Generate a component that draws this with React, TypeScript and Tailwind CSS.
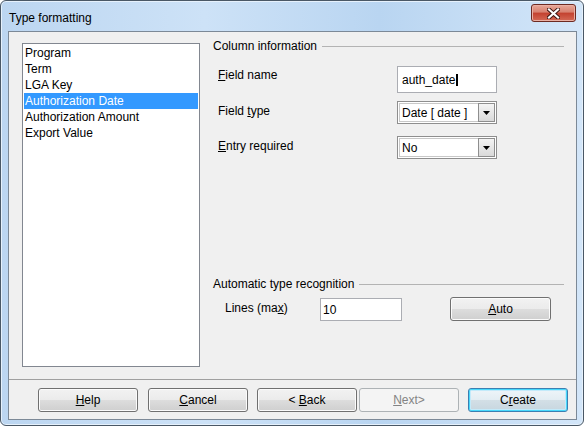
import React from 'react';

const listItems = ['Program', 'Term', 'LGA Key', 'Authorization Date', 'Authorization Amount', 'Export Value'];

const btnBase =
    'h-[24px] w-[100px] rounded-[3px] border flex items-center justify-center text-[12px] leading-none';
const btnNormal =
    btnBase +
    ' border-[#707070] bg-[linear-gradient(#f2f2f2_0%,#ebebeb_49%,#dddddd_50%,#cfcfcf_100%)] shadow-[inset_0_0_0_1px_#fbfbfb]';

const SectionHeader = ({ title }: { title: string }) => (
    <div className="flex h-[16px] items-center">
        <span className="text-[12px] leading-[16px] whitespace-nowrap">{title}</span>
        <div className="ml-[5px] h-px flex-1 bg-[#b3b3b3]" />
    </div>
);

const Combo = ({ value }: { value: string }) => (
    <div className="flex h-[23px] w-[100px] border border-[#8e8e8e] bg-white p-[1px]">
        <div className="flex flex-1 items-center border border-r-0 border-[#c8c8c8] pl-[2px] text-[12px]">
            {value}
        </div>
        <div className="flex w-[17px] items-center justify-center border border-[#8e8e8e] bg-[linear-gradient(#f4f4f4,#d9d9d9)]">
            <svg width="7" height="4" viewBox="0 0 7 4">
                <path d="M0 0h7L3.5 4z" fill="#000" />
            </svg>
        </div>
    </div>
);

export default function App() {
    return (
        <div className="relative h-[427px] w-[588px] overflow-hidden bg-white font-['Liberation_Sans',Arial,sans-serif] text-black">
            <div className="flex h-[426px] w-[584px] flex-col rounded-[6px] border border-[#4a5866] bg-[linear-gradient(90deg,#bcd6f1_0%,#cde2f7_35%,#b9d5f1_65%,#d3e6f9_100%)] pb-[5px] pl-[7px] pr-[6px] shadow-[inset_0_0_0_1px_#e6f1fc]">
                {/* title bar */}
                <div className="flex h-[30px] shrink-0 items-start">
                    <span className="ml-[1px] mt-[10px] text-[12px] leading-[14px]">Type formatting</span>
                    <div className="ml-auto mr-[1px] mt-[3px] flex h-[18px] w-[45px] items-center justify-center rounded-[3px] border border-[#6d2a22] bg-[linear-gradient(#e8a899_0%,#d7806f_45%,#c3412f_50%,#d46a56_100%)] shadow-[inset_0_0_0_1px_#eab0a4]">
                        <svg width="13" height="11" viewBox="0 0 13 11">
                            <path d="M2 1.5l9 8M11 1.5l-9 8" stroke="#3a1410" strokeWidth="4" strokeLinecap="square" />
                            <path d="M2 1.5l9 8M11 1.5l-9 8" stroke="#fff" strokeWidth="2.2" strokeLinecap="square" />
                        </svg>
                    </div>
                </div>

                {/* client area */}
                <div className="flex h-[389px] flex-col border border-[#7c8997] bg-[#f0f0f0]">
                    <div className="flex h-[347px] shrink-0">
                        <div className="ml-[13px] mt-[11px] h-[324px] w-[178px] border border-[#828790] bg-white p-[1px]">
                            {listItems.map((item) => (
                                <div
                                    key={item}
                                    className={
                                        'h-[16px] pl-[1px] text-[12px] leading-[16px] whitespace-nowrap ' +
                                        (item === 'Authorization Date' ? 'bg-[#3399ff] text-white' : '')
                                    }
                                >
                                    {item}
                                </div>
                            ))}
                        </div>

                        <div className="ml-[13px] mt-[6px] flex w-[351px] flex-col">
                            <SectionHeader title="Column information" />

                            <div className="mt-[12px] flex items-start">
                                <span className="mt-[1px] w-[184px] pl-[5px] text-[12px] leading-[16px]">
                                    <u>F</u>ield name
                                </span>
                                <div className="flex h-[27px] w-[100px] items-center border border-[#abadb3] bg-white pl-[4px] text-[12px]">
                                    auth_date
                                    <span className="ml-[1px] h-[12px] w-[2px] bg-black" />
                                </div>
                            </div>

                            <div className="mt-[8px] flex items-start">
                                <span className="mt-[2px] w-[184px] pl-[5px] text-[12px] leading-[16px]">
                                    Field <u>t</u>ype
                                </span>
                                <Combo value="Date [ date ]" />
                            </div>

                            <div className="mt-[12px] flex items-start">
                                <span className="mt-[2px] w-[184px] pl-[5px] text-[12px] leading-[16px]">
                                    <u>E</u>ntry required
                                </span>
                                <Combo value="No" />
                            </div>

                            <div className="mt-[117px]">
                                <SectionHeader title="Automatic type recognition" />
                            </div>

                            <div className="mt-[5px] flex items-start">
                                <span className="mt-[3px] w-[107px] pl-[12px] text-[12px] leading-[16px]">
                                    Lines (ma<u>x</u>)
                                </span>
                                <div className="mt-[1px] flex h-[23px] w-[82px] items-center border border-[#abadb3] bg-white pl-[2px] text-[12px]">
                                    10
                                </div>
                                <button className={btnNormal + ' ml-[48px] w-[101px]'}>
                                    <span>
                                        <u>A</u>uto
                                    </span>
                                </button>
                            </div>
                        </div>
                    </div>

                    <div className="h-px shrink-0 bg-[#a0a0a0]" />

                    <div className="flex pl-[29px] pt-[8px]">
                        <button className={btnNormal}>
                            <span>
                                <u>H</u>elp
                            </span>
                        </button>
                        <button className={btnNormal + ' ml-[10px]'}>
                            <span>
                                <u>C</u>ancel
                            </span>
                        </button>
                        <button className={btnNormal + ' ml-[9px]'}>
                            <span>
                                &lt; <u>B</u>ack
                            </span>
                        </button>
                        <button className={btnBase + ' ml-[2px] border-[#adb2b5] bg-[#f4f4f4] text-[#838383]'}>
                            <span>
                                <u>N</u>ext&gt;
                            </span>
                        </button>
                        <button
                            className={
                                btnBase +
                                ' ml-[9px] border-[#3c7fb1] bg-[linear-gradient(#eef5f9_0%,#e3edf3_49%,#d3dfe6_50%,#c7d6df_100%)] shadow-[inset_0_0_0_1px_#48d8fb,inset_0_0_0_2px_#c3eafa]'
                            }
                        >
                            <span>
                                C<u>r</u>eate
                            </span>
                        </button>
                    </div>
                </div>
            </div>
        </div>
    );
}
